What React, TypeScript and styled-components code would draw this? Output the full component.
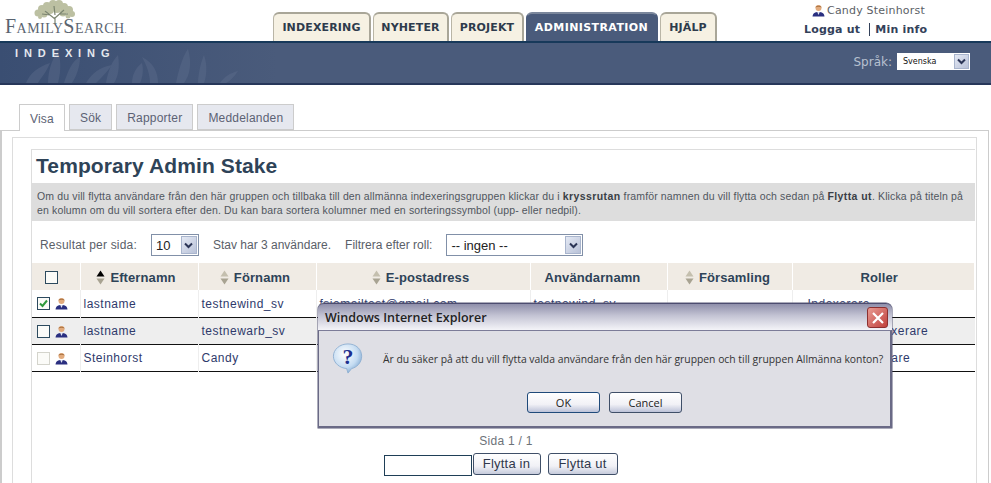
import React, { FC } from "react";
import styled, { createGlobalStyle } from "styled-components";

type Member = { last: string; first: string; email: string; user: string; roles: string; checked?: boolean; dim?: boolean };

const members: Member[] = [
  { last: "lastname", first: "testnewind_sv", email: "fsiemailtest@gmail.com", user: "testnewind_sv", roles: "Indexerare", checked: true },
  { last: "lastname", first: "testnewarb_sv", email: "fsiemailtest@gmail.com", user: "testnewarb_sv", roles: "Stavchef, Indexerare" },
  { last: "Steinhorst", first: "Candy", email: "candy@familysearch.org", user: "candysteinhorst", roles: "Admin Indexerare", dim: true },
];

const navItems = [
  { label: "INDEXERING", width: 98 },
  { label: "NYHETER", width: 76 },
  { label: "PROJEKT", width: 73 },
  { label: "ADMINISTRATION", width: 132 },
  { label: "HJÄLP", width: 57 },
];
const subTabs = ["Visa", "Sök", "Rapporter", "Meddelanden"];
const columns = [
  { label: "Efternamn", sort: "up", pad: 6 },
  { label: "Förnamn", sort: "none", pad: 4 },
  { label: "E-postadress", sort: "none", pad: 5 },
  { label: "Användarnamn", pad: 12 },
  { label: "Församling", sort: "none", pad: 4 },
  { label: "Roller", pad: 8 },
];

const UserIcon: FC = () => (
  <svg width="13" height="13" viewBox="0 0 13 13">
    <path d="M0.5 12.5 C1 9 3 8 6.5 8 C10 8 12 9 12.5 12.5 Z" fill="#2a2f80" />
    <path d="M5.2 8 L6.5 11 L7.8 8 Z" fill="#dfe3f0" />
    <circle cx="6.5" cy="4" r="3" fill="#e2ab7d" />
    <path d="M3.4 3.6 C3.6 1 9.4 1 9.6 3.6 C8 2.6 5 2.6 3.4 3.6 Z" fill="#a9713f" />
  </svg>
);

const SortIcon: FC<{ active?: boolean }> = ({ active }) => (
  <svg width="9" height="15" viewBox="0 0 9 15">
    <path d="M4.5 0.5 L8.5 6.5 L0.5 6.5 Z" fill={active ? "#000000" : "#c4bfae"} />
    <path d="M4.5 14.5 L8.5 8.5 L0.5 8.5 Z" fill="#a8a392" />
  </svg>
);

const ArrowIcon: FC = () => (
  <svg width="9" height="7" viewBox="0 0 9 7">
    <path d="M1 1.5 L4.5 5 L8 1.5" fill="none" stroke="#2b3556" strokeWidth="2" />
  </svg>
);

const CheckIcon: FC = () => (
  <svg width="11" height="11" viewBox="0 0 11 11">
    <path d="M2 5.5 L4.5 8 L9 2.5" fill="none" stroke="#2f9a3c" strokeWidth="2" />
  </svg>
);

const QuestionIcon: FC = () => (
  <svg width="32" height="31" viewBox="0 0 34 34">
    <defs>
      <radialGradient id="bubble" cx="40%" cy="35%" r="70%">
        <stop offset="0%" stopColor="#ffffff" />
        <stop offset="65%" stopColor="#c5dcf2" />
        <stop offset="100%" stopColor="#7fa6cf" />
      </radialGradient>
    </defs>
    <path d="M17 1 C26 1 32 7 32 14.5 C32 22 26 27 21 28 L17 33 L15.5 28 C8 27.5 1 22 1 14.5 C1 7 8 1 17 1 Z" fill="url(#bubble)" stroke="#8fb0d2" />
    <text x="17" y="23" textAnchor="middle" fontFamily="Liberation Serif, serif" fontWeight="700" fontSize="24" fill="#1c2f8f">?</text>
  </svg>
);

const foliage = [
  [5, 13, 3.5], [9, 9, 4], [14, 6, 4], [20, 4, 4], [26, 4, 4], [31, 7, 4], [36, 10, 4], [39, 14, 3],
  [11, 14, 3.5], [17, 10, 4], [24, 9, 4], [30, 13, 3.5], [35, 16, 2.5], [7, 17, 2],
];

const LogoTree: FC = () => (
  <svg width="44" height="32" viewBox="0 0 44 32">
    <g fill="#bcc0a2">
      {foliage.map(([cx, cy, r]) => (
        <circle key={`${cx}-${cy}`} cx={cx} cy={cy} r={r} />
      ))}
    </g>
    <path d="M22 24 L22 17 M22 19 L12 11 M17 15 L9 14 M22 18 L31 10 M27 14 L35 14 M22 15 L21 6" fill="none" stroke="#7c8570" strokeWidth="1.2" />
  </svg>
);

const BandLeaves: FC = () => (
  <svg width="240" height="40" viewBox="0 0 240 40">
    <g fill="#60708f" opacity="0.4">
      <path d="M18 40 C22 30 30 24 42 20 C38 30 32 36 30 40 Z" />
      <path d="M40 40 C40 28 44 16 50 8 C54 20 52 32 50 40 Z" />
      <path d="M56 40 C60 28 64 18 72 14 C72 24 68 34 64 40 Z" />
      <path d="M78 40 C84 30 92 24 104 22 C98 30 92 36 88 40 Z" />
      <path d="M98 40 C100 28 104 18 110 12 C112 24 110 34 106 40 Z" />
      <path d="M124 40 C124 32 128 24 134 20 C136 28 134 36 132 40 Z" />
      <path d="M142 40 C142 28 136 18 134 14 C146 20 150 30 150 40 Z" />
      <path d="M168 40 C170 30 174 14 180 6 C184 20 182 32 176 40 Z" />
      <path d="M190 40 C190 30 194 16 196 12 C200 24 198 34 196 40 Z" />
      <path d="M212 40 C216 34 222 30 230 28 C226 34 222 38 218 40 Z" />
    </g>
  </svg>
);

export default function App() {
  return (
    <Page>
      <GlobalStyle />
      <TopBar>
        <Logo>
          <LogoText>
            FamilySearch<small>.</small>
          </LogoText>
          <TreeSlot>
            <LogoTree />
          </TreeSlot>
        </Logo>
        <Nav>
          {navItems.map((item) => (
            <NavTab key={item.label} $width={item.width} $active={item.label === "ADMINISTRATION"}>
              {item.label}
            </NavTab>
          ))}
        </Nav>
        <UserBox>
          <UserName>
            <UserIcon />
            Candy Steinhorst
          </UserName>
          <UserLinks>
            <a>Logga ut</a>
            <a>Min info</a>
          </UserLinks>
        </UserBox>
      </TopBar>
      <Band>
        <LeavesSlot>
          <BandLeaves />
        </LeavesSlot>
        <BandTitle>INDEXING</BandTitle>
        <Language>
          Språk:
          <LanguageSelect>
            Svenska
            <SelectArrow $small>
              <ArrowIcon />
            </SelectArrow>
          </LanguageSelect>
        </Language>
      </Band>
      <SubTabs>
        {subTabs.map((tab) => (
          <SubTab key={tab} $active={tab === "Visa"}>
            {tab}
          </SubTab>
        ))}
      </SubTabs>
      <OuterPanel>
        <MiddlePanel>
          <Section>
            <Title>Temporary Admin Stake</Title>
            <Help>
              <HelpLine>
                Om du vill flytta användare från den här gruppen och tillbaka till den allmänna indexeringsgruppen klickar du i{" "}
                <b>kryssrutan</b> framför namnen du vill flytta och sedan på <b>Flytta ut</b>. Klicka på titeln på
              </HelpLine>
              <HelpLine>en kolumn om du vill sortera efter den. Du kan bara sortera kolumner med en sorteringssymbol (upp- eller nedpil).</HelpLine>
            </Help>
            <Controls>
              <PerPageLabel>Resultat per sida:</PerPageLabel>
              <FakeSelect $width={48}>
                10
                <SelectArrow>
                  <ArrowIcon />
                </SelectArrow>
              </FakeSelect>
              <Count>Stav har 3 användare.</Count>
              <span>Filtrera efter roll:</span>
              <FakeSelect $width={137}>
                -- ingen --
                <SelectArrow>
                  <ArrowIcon />
                </SelectArrow>
              </FakeSelect>
            </Controls>
            <Table>
              <colgroup>
                <col width="48" />
                <col width="118" />
                <col width="118" />
                <col width="214" />
                <col width="137" />
                <col width="125" />
                <col />
              </colgroup>
              <thead>
                <tr>
                  <BoxTh>
                    <Box />
                  </BoxTh>
                  {columns.map((col) => (
                    <Th key={col.label} $pad={col.pad}>
                      <ThInner>
                        {col.sort && <SortIcon active={col.sort === "up"} />}
                        {col.label}
                      </ThInner>
                    </Th>
                  ))}
                </tr>
              </thead>
              <tbody>
                {members.map((m, i) => (
                  <Row key={m.first} $shaded={i === 1}>
                    <Td>
                      <SelectCell>
                        <Box $dim={m.dim}>{m.checked && <CheckIcon />}</Box>
                        <UserIcon />
                      </SelectCell>
                    </Td>
                    <Td>{m.last}</Td>
                    <Td>{m.first}</Td>
                    <Td>{m.email}</Td>
                    <Td>{m.user}</Td>
                    <Td />
                    <RolesTd>{m.roles}</RolesTd>
                  </Row>
                ))}
              </tbody>
            </Table>
            <Pager>Sida 1 / 1</Pager>
            <Actions>
              <ActionInput />
              <ActionButton $width={68}>Flytta in</ActionButton>
              <ActionButton $width={70}>Flytta ut</ActionButton>
            </Actions>
          </Section>
        </MiddlePanel>
      </OuterPanel>
      <Dialog>
        <DialogTitle>
          Windows Internet Explorer
          <CloseButton>
            <svg width="14" height="14" viewBox="0 0 14 14">
              <path d="M2 2 L12 12 M12 2 L2 12" stroke="#ffffff" strokeWidth="2.2" />
            </svg>
          </CloseButton>
        </DialogTitle>
        <DialogBody>
          <DialogMessage>
            <QuestionIcon />
            <span>Är du säker på att du vill flytta valda användare från den här gruppen och till gruppen Allmänna konton?</span>
          </DialogMessage>
          <DialogButtons>
            <DialogButton $primary>OK</DialogButton>
            <DialogButton>Cancel</DialogButton>
          </DialogButtons>
        </DialogBody>
      </Dialog>
    </Page>
  );
}

const GlobalStyle = createGlobalStyle`
  html, body {
    margin: 0;
    background: #ffffff;
  }
`;

const Page = styled.div`
  position: relative;
  width: 991px;
  height: 483px;
  overflow: hidden;
  background: #ffffff;
  font-family: "Liberation Sans", Arial, sans-serif;
`;

const TopBar = styled.div`
  display: flex;
  height: 41px;
`;

const Logo = styled.div`
  position: relative;
  width: 273px;
  flex-shrink: 0;
`;

const TreeSlot = styled.div`
  position: absolute;
  left: 33px;
  top: 0;
`;

const LogoText = styled.div`
  position: absolute;
  left: 5px;
  top: 15px;
  font-family: "Liberation Serif", serif;
  font-variant: small-caps;
  font-size: 20px;
  letter-spacing: 0.45px;
  color: #5a6470;

  small {
    font-size: 8px;
  }
`;

const Nav = styled.nav`
  display: flex;
  align-items: flex-end;
  gap: 2px;
  padding-top: 12px;
`;

const NavTab = styled.div<{ $active?: boolean; $width: number }>`
  width: ${(p) => p.$width}px;
  height: 29px;
  display: flex;
  align-items: center;
  justify-content: center;
  box-sizing: border-box;
  border: 1px solid ${(p) => (p.$active ? "#4a5b7b" : "#b9b5a6")};
  border-top: 2px solid ${(p) => (p.$active ? "#7b879c" : "#a9a698")};
  border-right: 2px solid ${(p) => (p.$active ? "#4a5b7b" : "#a9a698")};
  border-bottom: 0;
  border-radius: 6px 6px 0 0;
  background: ${(p) => (p.$active ? "#4a5b7b" : "#f6f1e3")};
  color: ${(p) => (p.$active ? "#ffffff" : "#2e3b4c")};
  font-family: "DejaVu Sans", Verdana, sans-serif;
  font-size: 11px;
  font-weight: 700;
  letter-spacing: ${(p) => (p.$active ? 0.4 : 0.15)}px;
`;

const UserBox = styled.div`
  margin-left: 87px;
  width: 130px;
  display: flex;
  flex-direction: column;
  font-family: "DejaVu Sans", Verdana, sans-serif;
  font-size: 11px;
  letter-spacing: 0.2px;
`;

const UserName = styled.div`
  display: flex;
  align-items: center;
  gap: 2px;
  margin-left: 8px;
  height: 20px;
  color: #5c5f66;
`;

const UserLinks = styled.div`
  display: flex;
  font-weight: 700;
  color: #33415a;
  height: 18px;
  align-items: center;

  a:first-child {
    padding-right: 9px;
    margin-right: 5px;
    border-right: 1px solid #33415a;
  }
`;

const Band = styled.div`
  position: relative;
  box-sizing: border-box;
  height: 44px;
  border-top: 2px solid #17395a;
  border-bottom: 2px solid #27375a;
  background: linear-gradient(90deg, #3a4e72 0%, #4a5b7b 28%, #4a5b7b 100%);
  display: flex;
  justify-content: space-between;
`;

const LeavesSlot = styled.div`
  position: absolute;
  left: 8px;
  bottom: 0;
  height: 40px;
`;

const BandTitle = styled.div`
  position: relative;
  margin: 4px 0 0 15px;
  color: #e4e8ee;
  font-size: 11px;
  font-weight: 700;
  letter-spacing: 5.9px;
`;

const Language = styled.div`
  position: relative;
  display: flex;
  gap: 5px;
  margin: 10px 21px 0 0;
  height: 17px;
  align-items: center;
  color: #b7c0d0;
  font-family: "DejaVu Sans", Verdana, sans-serif;
  font-size: 12px;
`;

const LanguageSelect = styled.div`
  position: relative;
  box-sizing: border-box;
  width: 73px;
  height: 17px;
  padding: 1px 0 0 6px;
  background: #ffffff;
  color: #111111;
  font-size: 8px;
  line-height: 15px;
`;

const SelectArrow = styled.span<{ $small?: boolean }>`
  position: absolute;
  top: 1px;
  right: 1px;
  bottom: 1px;
  width: ${(p) => (p.$small ? 15 : 16)}px;
  display: flex;
  align-items: center;
  justify-content: center;
  background: linear-gradient(135deg, #e4e9f4, #b9c2d8);
  border: 1px solid #a9b5cd;
  box-sizing: border-box;
`;

const SubTabs = styled.div`
  display: flex;
  align-items: flex-end;
  gap: 4px;
  height: 45px;
  padding-left: 19px;
  box-sizing: border-box;
`;

const SubTab = styled.div<{ $active?: boolean }>`
  box-sizing: border-box;
  height: ${(p) => (p.$active ? 27 : 26)}px;
  margin-bottom: ${(p) => (p.$active ? -1 : 0)}px;
  padding: 1px 10px 0;
  display: flex;
  align-items: center;
  border: 1px solid #cccccc;
  border-bottom: ${(p) => (p.$active ? "0" : "1px solid #cccccc")};
  background: ${(p) => (p.$active ? "#ffffff" : "#e6e8ef")};
  color: #5c6274;
  font-size: 12px;
  letter-spacing: 0.2px;
  position: relative;
`;

const OuterPanel = styled.div`
  box-sizing: border-box;
  width: 989px;
  height: 353px;
  padding: 6px 0 0 10px;
  border-top: 1px solid #cccccc;
  border-left: 2px solid #cccccc;
  border-right: 1px solid #cccccc;
`;

const MiddlePanel = styled.div`
  box-sizing: border-box;
  width: 965px;
  height: 100%;
  padding: 11px 1px 0 18px;
  border-top: 1px solid #dddddd;
  border-left: 1px solid #dddddd;
  border-right: 1px solid #dddddd;
`;

const Section = styled.div`
  box-sizing: border-box;
  width: 944px;
  height: 100%;
  border-top: 1px solid #dddddd;
  border-left: 1px solid #dddddd;
`;

const Title = styled.h1`
  margin: 0;
  height: 33px;
  padding-left: 4px;
  font-size: 21px;
  line-height: 31px;
  letter-spacing: 0.1px;
  font-weight: 700;
  color: #2e4358;
`;

const Help = styled.div`
  box-sizing: border-box;
  height: 38px;
  padding: 6px 0 0 5px;
  background: #dddddd;
  color: #50565e;
  font-size: 10.5px;
  line-height: 14px;
  letter-spacing: 0.14px;
  white-space: nowrap;

  b {
    color: #3a3f46;
    letter-spacing: 0.4px;
  }
`;

const HelpLine = styled.span`
  display: block;
`;

const Controls = styled.div`
  display: flex;
  align-items: center;
  padding: 13px 0 7px 8px;
  color: #5a6068;
  font-size: 12px;
`;

const PerPageLabel = styled.span`
  letter-spacing: 0.2px;
`;

const FakeSelect = styled.div<{ $width: number }>`
  position: relative;
  box-sizing: border-box;
  width: ${(p) => p.$width}px;
  height: 22px;
  margin-left: 14px;
  padding-left: 4px;
  border: 1px solid #8190a8;
  color: #222222;
  font-size: 13px;
  line-height: 21px;
`;

const Count = styled.span`
  margin: 0 14px;
`;

const Table = styled.table`
  width: 943px;
  border-collapse: collapse;
  table-layout: fixed;
`;

const Th = styled.th<{ $pad?: number }>`
  height: 26px;
  padding: 1px ${(p) => p.$pad ?? 0}px 0 0;
  background: #f0ebe4;
  border-right: 1px solid #ffffff;
  color: #2e4358;
  font-size: 13px;
  font-weight: 700;
  letter-spacing: 0.1px;
  text-align: center;
`;

const BoxTh = styled(Th)`
  padding: 0 0 0 13px;
  text-align: left;
`;

const ThInner = styled.span`
  display: flex;
  align-items: center;
  justify-content: center;
  gap: 5px;
`;

const Box = styled.span<{ $dim?: boolean }>`
  display: inline-flex;
  align-items: center;
  justify-content: center;
  vertical-align: middle;
  box-sizing: border-box;
  width: 13px;
  height: 13px;
  background: #fbfbf8;
  border: 1px solid ${(p) => (p.$dim ? "#d4d4cc" : "#2c4a5e")};
`;

const Row = styled.tr<{ $shaded?: boolean }>`
  height: 27px;
  background: ${(p) => (p.$shaded ? "#eeeeee" : "#ffffff")};
  border-bottom: 1px solid #111111;
`;

const Td = styled.td`
  padding: 1px 0 0 3px;
  border-right: 1px solid #eeeeee;
  color: #2f3a6b;
  font-size: 12px;
  letter-spacing: 0.5px;
  white-space: nowrap;
  overflow: hidden;
`;

const RolesTd = styled(Td)`
  padding-left: 15px;
  border-right: 0;
`;

const SelectCell = styled.span`
  display: flex;
  align-items: center;
  gap: 5px;
  padding-left: 2px;
`;

const Pager = styled.div`
  margin-top: 62px;
  text-align: center;
  color: #6c7278;
  font-size: 12px;
  letter-spacing: 0.3px;
  line-height: 14px;
  padding-left: 5px;
`;

const Actions = styled.div`
  display: flex;
  justify-content: center;
  align-items: flex-start;
  gap: 7px;
  margin-top: 5px;
  padding-right: 6px;
`;

const ActionInput = styled.span`
  box-sizing: border-box;
  width: 88px;
  height: 21px;
  margin: 2px -6px 0 0;
  border: 1px solid #1f3f57;
`;

const ActionButton = styled.span<{ $width: number }>`
  box-sizing: border-box;
  height: 22px;
  width: ${(p) => p.$width}px;
  display: flex;
  align-items: center;
  justify-content: center;
  border: 1px solid #3f4f68;
  border-radius: 3px;
  background: linear-gradient(180deg, #ffffff 0%, #f1f1f6 60%, #c6cbdc 100%);
  color: #30384c;
  font-size: 13px;
  letter-spacing: 0.2px;
`;

const Dialog = styled.div`
  position: absolute;
  left: 318px;
  top: 303px;
  width: 574px;
  height: 125px;
  box-sizing: border-box;
  display: flex;
  flex-direction: column;
  border-radius: 6px 6px 0 0;
  background: #dfdfe5;
  box-shadow: 0 0 0 0.5px #5a5a78;
  font-family: "Open Sans", "Liberation Sans", sans-serif;
`;

const DialogTitle = styled.div`
  position: relative;
  height: 27px;
  box-sizing: border-box;
  padding: 5px 0 0 7px;
  border-top: 1px solid #4d4d70;
  border-radius: 6px 6px 0 0;
  background: linear-gradient(180deg, #8f8fab 0%, #c4c4d4 45%, #f4f4f8 100%);
  color: #222222;
  font-size: 12.5px;
  font-weight: 600;
`;

const CloseButton = styled.span`
  position: absolute;
  top: 3px;
  right: 4px;
  width: 21px;
  height: 21px;
  box-sizing: border-box;
  display: flex;
  align-items: center;
  justify-content: center;
  border: 1px solid #8c3030;
  border-radius: 3px;
  background: linear-gradient(135deg, #e89a92, #c0403c);
`;

const DialogBody = styled.div`
  flex: 1;
  display: flex;
  flex-direction: column;
  border: 1px solid #6a6a86;
  border-top: 1px solid #7c7c98;
  border-right: 2px solid #6a6a86;
  border-bottom: 2px solid #6a6a86;
  padding: 0 0 0 13px;
`;

const DialogMessage = styled.div`
  display: flex;
  align-items: center;
  gap: 19px;
  margin-top: 12px;
  color: #333333;
  font-size: 10.35px;
  white-space: nowrap;
`;

const DialogButtons = styled.div`
  display: flex;
  justify-content: center;
  gap: 9px;
  margin-top: 18px;
  padding-right: 13px;
`;

const DialogButton = styled.span<{ $primary?: boolean }>`
  box-sizing: border-box;
  width: 73px;
  height: 21px;
  display: flex;
  align-items: center;
  justify-content: center;
  border: 1px solid ${(p) => (p.$primary ? "#1f4a7a" : "#3f4f68")};
  border-radius: 3px;
  background: linear-gradient(180deg, #ffffff 0%, #f1f1f6 60%, #bcc2d8 100%);
  color: #222222;
  font-size: 11px;
`;
